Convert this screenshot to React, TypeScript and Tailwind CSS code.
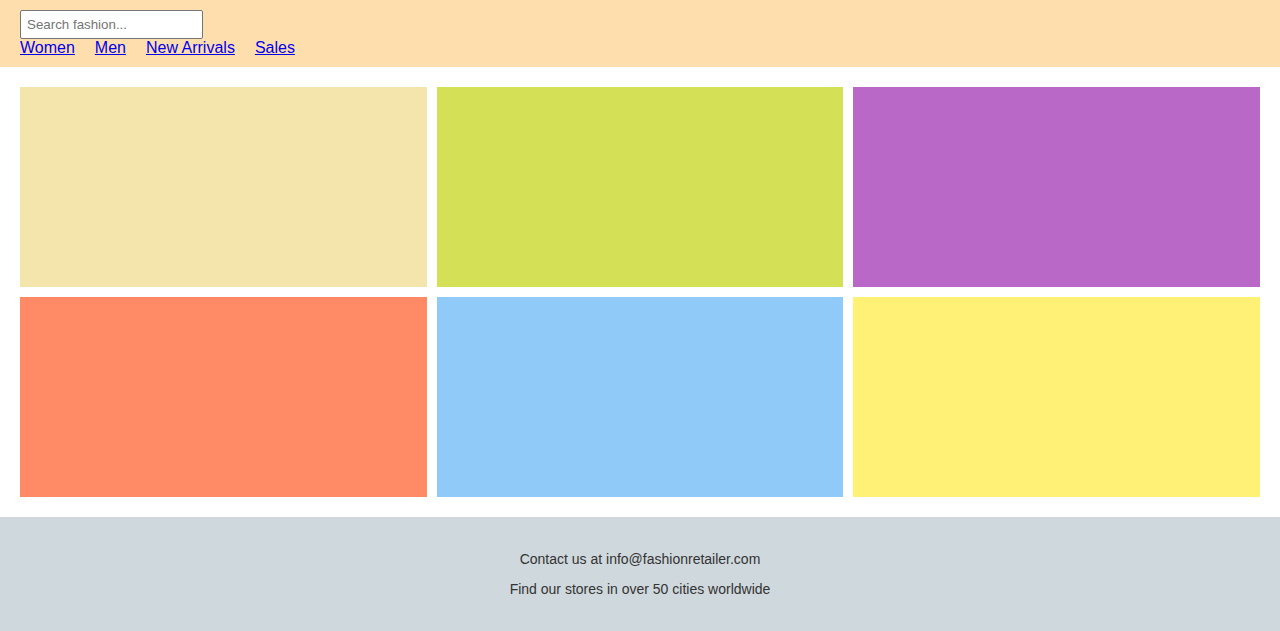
export default function App() {
  const tiles = ["bg-[#F3E5AB]", "bg-[#D4E157]", "bg-[#BA68C8]", "bg-[#FF8A65]", "bg-[#90CAF9]", "bg-[#FFF176]"];
  return (
    <div className="font-['Liberation_Sans',Arial,sans-serif] bg-white">
      <header className="bg-[#FFDEAD] pt-[10px] pb-[10px] px-[20px]">
        <input
          type="text"
          placeholder="Search fashion..."
          className="block w-[183px] h-[29px] px-[6px] border border-[#767676] rounded-[2px] bg-white text-[13.33px] text-black placeholder:text-[#757575] outline-none"
        />
        <nav className="flex gap-[20px] text-[16px] leading-[18px]">
          <a href="#" className="text-[#0000EE] underline">Women</a>
          <a href="#" className="text-[#0000EE] underline">Men</a>
          <a href="#" className="text-[#0000EE] underline">New Arrivals</a>
          <a href="#" className="text-[#0000EE] underline">Sales</a>
        </nav>
      </header>
      <main className="p-[20px] grid grid-cols-3 gap-[10px]">
        {tiles.map((t, i) => (
          <div key={i} className={`${t} h-[200px]`} />
        ))}
      </main>
      <footer className="bg-[#CFD8DC] py-[34px] text-center text-[14px] leading-[16px] text-[#333333] flex flex-col gap-[14px]">
        <p>Contact us at info@fashionretailer.com</p>
        <p>Find our stores in over 50 cities worldwide</p>
      </footer>
    </div>
  );
}
